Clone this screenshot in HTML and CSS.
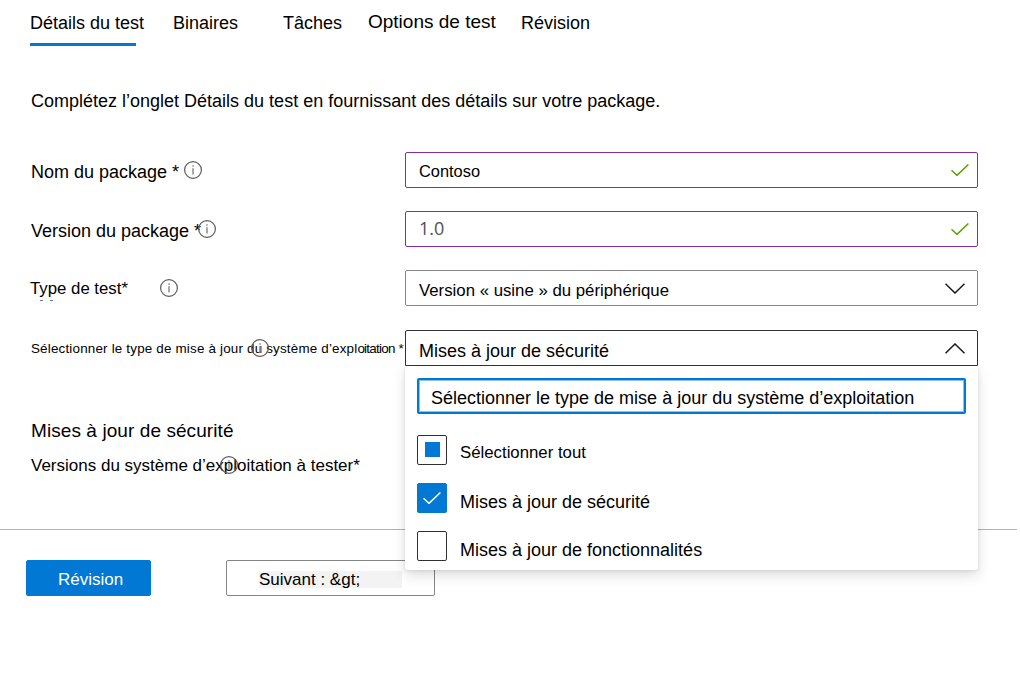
FILE: index.html
```html
<!DOCTYPE html>
<html lang="fr">
<head>
<meta charset="utf-8">
<title>Détails du test</title>
<link rel="stylesheet" href="styles.css">
</head>
<body>
<svg class="defs" aria-hidden="true">
  <symbol id="info" viewBox="0 0 18 18">
    <circle cx="9" cy="9" r="8.4" fill="none" stroke="#5c5c5c" stroke-width="1.2"/>
    <path d="M9 7.2V13.4M9 4.2V5.8" fill="none" stroke="#8a8a8a" stroke-width="1.5"/>
  </symbol>
  <symbol id="check" viewBox="0 0 18 12">
    <path d="M.5 6.2 6 11.4 17.4.5" fill="none" stroke="currentColor" stroke-width="1.5"/>
  </symbol>
  <symbol id="chevron" viewBox="0 0 20 11">
    <path d="M.5.7 10 10 19.5.7" fill="none" stroke="currentColor" stroke-width="1.5"/>
  </symbol>
</svg>

<nav class="tabs">
  <a class="tab tab-details">Détails du test</a>
  <a class="tab tab-binaries">Binaires</a>
  <a class="tab tab-tasks">Tâches</a>
  <a class="tab tab-options">Options de test</a>
  <a class="tab tab-review">Révision</a>
</nav>

<main class="form">
  <p class="intro">Complétez l’onglet Détails du test en fournissant des détails sur votre package.</p>

  <div class="row">
    <div class="label label-name"><span>Nom du package *</span><svg class="info"><use href="#info"/></svg></div>
    <div class="field valid"><span class="value-name">Contoso</span><svg class="check"><use href="#check"/></svg></div>
  </div>
  <div class="row">
    <div class="label label-version"><span>Version du package *</span><svg class="info"><use href="#info"/></svg></div>
    <div class="field valid"><span class="value-version">1.0</span><svg class="check"><use href="#check"/></svg></div>
  </div>
  <div class="row row-type">
    <div class="label label-type"><span>Type de test*</span><svg class="info"><use href="#info"/></svg></div>
    <div class="field"><span class="value-type">Version « usine » du périphérique</span><svg class="chevron"><use href="#chevron"/></svg></div>
  </div>
  <div class="row row-update">
    <div class="label label-update"><span>Sélectionner le type de mise à jour du système d’expl<span class="tight">oitation</span> *</span><svg class="info"><use href="#info"/></svg></div>
    <div class="field open"><span class="value-update">Mises à jour de sécurité</span><svg class="chevron up"><use href="#chevron"/></svg>
      <div class="menu">
        <div class="search">Sélectionner le type de mise à jour du système d’exploitation</div>
        <div class="option option-all"><span class="box mixed"></span><span>Sélectionner tout</span></div>
        <div class="option"><span class="box checked"><svg class="check"><use href="#check"/></svg></span><span>Mises à jour de sécurité</span></div>
        <div class="option"><span class="box"></span><span>Mises à jour de fonctionnalités</span></div>
      </div>
    </div>
  </div>

  <h2 class="heading">Mises à jour de sécurité</h2>
  <div class="label label-os"><span>Versions du système d’exploitation à tester*</span><svg class="info"><use href="#info"/></svg></div>
</main>

<footer class="actions">
  <button class="btn primary">Révision</button>
  <button class="btn next"><span>Suivant : &amp;gt;</span></button>
</footer>
</body>
</html>
```
FILE: styles.css
```css
* { box-sizing: border-box; }
body {
  margin: 0;
  width: 1020px;
  height: 685px;
  overflow: hidden;
  background: #fff;
  color: #000;
  font: 18px/24px "Liberation Sans", Arial, sans-serif;
  white-space: nowrap;
}
.defs { display: none; }
svg { display: block; flex: none; }

.tabs { display: flex; height: 46px; padding: 11px 0 0 30px; }
.tab { height: 24px; }
.tab-details { width: 106px; height: 35px; margin-right: 37px; border-bottom: 3px solid #0078d4; }
.tab-binaries { width: 110px; }
.tab-tasks { width: 85px; }
.tab-options { width: 153px; margin-top: -1px; font-size: 19px; }

.form { height: 483px; padding: 43px 0 0 30px; }
.intro { margin: 0 0 39px; }
.row { display: flex; height: 36px; margin-bottom: 23px; }
.row-type { margin-bottom: 24px; }
.row-update { margin-bottom: 0; }
.label { display: flex; align-items: center; width: 375px; height: 36px; }
.label > span { padding-top: 4px; }
.info { width: 18px; height: 18px; }
.label-name > span { width: 149px; }
.label-name .info { margin-left: 4px; }
.label-version > span { width: 171px; }
.label-version .info { margin-left: -4px; }
.label-type { font-size: 16.8px; }
.label-type > span {
  width: 130px;
  padding: 2px 0 0;
  background:
    linear-gradient(#777, #777) 10px 25px / 3px 1px no-repeat,
    linear-gradient(#777, #777) 20px 25px / 3px 1px no-repeat;
}
.label-update { font-size: 13.4px; letter-spacing: .19px; }
.label-update > span { width: 375px; padding-top: 1px; }
.label-update .info { margin-left: -155px; }
.label-update .tight { letter-spacing: -.75px; }

.field {
  position: relative;
  display: flex;
  align-items: center;
  justify-content: space-between;
  width: 573px;
  height: 36px;
  padding: 0 12px 0 13px;
  border: 1px solid #868686;
  border-radius: 2px;
  font-size: 16.8px;
}
.valid { padding-right: 8px; border-color: #8a2da5; }
.open { border-color: #323130; border-radius: 2px 2px 0 0; }
.value-name { padding-top: 1px; font-size: 16.4px; }
.value-version { margin-top: -3px; color: #505050; font: 18px/24px "Open Sans", sans-serif; }
.value-type { padding-top: 5px; }
.value-update { padding-top: 5px; font-size: 18px; }
.check { width: 18px; height: 12px; }
.valid .check { color: #57a300; }
.chevron { width: 20px; height: 11px; color: #1b1a19; }
.up { transform: rotate(180deg); }

.menu {
  position: absolute;
  top: 35px;
  left: -1px;
  z-index: 1;
  width: 573px;
  height: 204px;
  padding: 12px;
  border-radius: 0 0 3px 3px;
  background: #fff;
  box-shadow: 0 6px 14px rgba(0,0,0,.12), 0 1px 4px rgba(0,0,0,.1);
  clip-path: inset(0 -30px -30px -30px);
  font-size: 18px;
  letter-spacing: 0;
}
.search {
  height: 36px;
  margin-bottom: 21px;
  padding: 6px 12px 0;
  border: 2px solid #0078d4;
  border-radius: 2px;
  box-shadow: inset 0 0 0 1px #8bc1eb;
}
.option { display: flex; align-items: center; gap: 13px; height: 30px; margin-bottom: 18px; }
.option > span:last-child { padding-top: 8px; }
.option-all { font-size: 16.8px; }
.option-all > span:last-child { padding-top: 6px; }
.box { display: grid; place-items: center; width: 30px; height: 30px; border: 1px solid #323130; border-radius: 2px; }
.mixed::before { content: ""; width: 15px; height: 15px; margin-left: 1px; margin-bottom: 1px; background: #0078d4; }
.checked { border-color: #0078d4; background: #0078d4; color: #fff; }

.heading { margin: 53px 0 0; padding-left: 1px; font-size: 19px; font-weight: 400; line-height: 24px; letter-spacing: .08px; }
.label-name, .label-version, .label-update, .intro, .label-os { padding-left: 1px; }
.label-os { margin-top: 4px; font-size: 17px; }
.label-os > span { width: 331px; padding-top: 2px; }
.label-os .info { margin: 0 0 0 -142px; }

.actions { display: flex; gap: 75px; width: 1017px; height: 67px; padding: 30px 0 0 26px; border-top: 1px solid #b3b3b3; }
.btn {
  width: 209px;
  height: 36px;
  padding: 2px 0 0 32px;
  border: 1px solid #868686;
  border-radius: 2px;
  background: #fff;
  color: #000;
  font: 17px/24px "Liberation Sans", Arial, sans-serif;
  text-align: left;
}
.primary { width: 125px; padding-top: 3px; padding-left: 31px; border-color: #0078d4; background: #0078d4; color: #fff; }
.next span { display: block; width: 143px; height: 17px; line-height: 17px; background: #f3f3f3; }
```
